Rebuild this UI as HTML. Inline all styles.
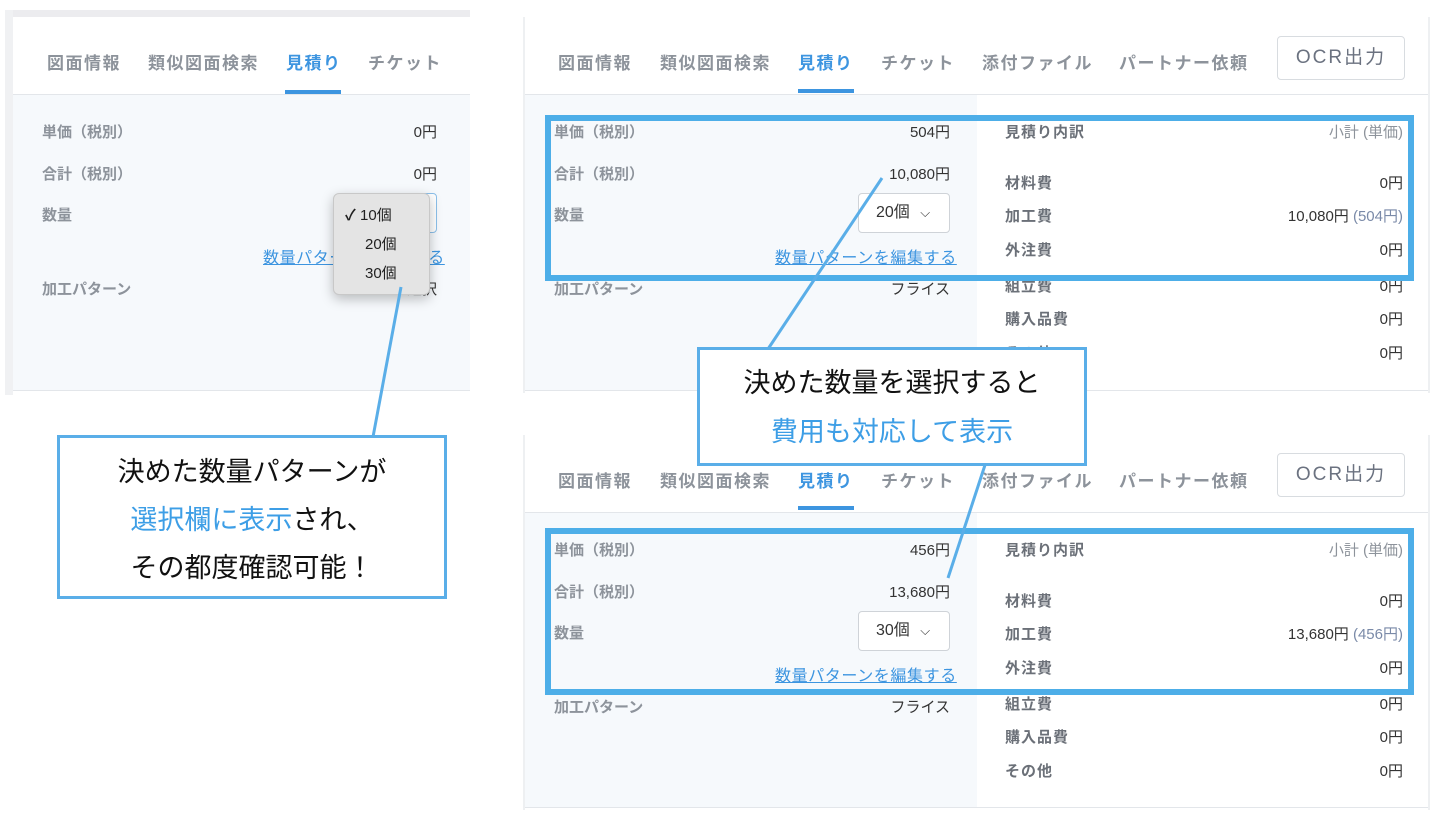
<!DOCTYPE html>
<html><head><meta charset="utf-8"><style>
*{margin:0;padding:0;box-sizing:border-box}
body{width:1440px;height:819px;background:#fff;position:relative;overflow:hidden;font-family:"Liberation Sans","Noto Sans CJK JP",sans-serif;}
.a{position:absolute;white-space:nowrap}
.tab{font-size:17px;font-weight:bold;color:#8d939b;letter-spacing:1.5px}
.tab.on{color:#3d95e0}
.lab{font-size:15px;font-weight:bold;color:#8d939b}
.val{font-size:15px;color:#333;text-align:right}
.rl{font-size:15px;font-weight:bold;color:#6b7078;letter-spacing:1px}
.link{font-size:16px;color:#3d95e0;text-decoration:underline;text-align:right;letter-spacing:0.6px}
.sel{position:absolute;border:1px solid #cfd3d8;border-radius:4px;background:#fff;font-size:16px;color:#333}
.btn{position:absolute;border:1px solid #d8dce0;border-radius:4px;background:#fff;font-size:19px;color:#6b7280;text-align:center;letter-spacing:2px}
.call{position:absolute;border:3px solid #5aaee8;background:#fff;text-align:center;font-size:27px;color:#111}
.blue{color:#3d9ee6}
.box{position:absolute;border:6px solid #4daee8}
</style></head><body>

<!-- Panel A -->
<div class="a" style="left:5px;top:10px;width:465px;height:7px;background:#ececef"></div>
<div class="a" style="left:5px;top:10px;width:8px;height:385px;background:#f0f1f3"></div>
<div class="a" style="left:13px;top:94px;width:457px;height:297px;background:#f6f9fc;border-top:1px solid #e3e6ea;border-bottom:1px solid #e3e6ea"></div>
<div class="a tab" style="left:47px;top:49px">図面情報</div>
<div class="a tab" style="left:148px;top:49px">類似図面検索</div>
<div class="a tab on" style="left:286px;top:49px">見積り</div>
<div class="a tab" style="left:368px;top:49px">チケット</div>
<div class="a" style="left:285px;top:90px;width:56px;height:4px;background:#3d95e0"></div>
<div class="a lab" style="left:42px;top:121px">単価（税別）</div>
<div class="a val" style="left:380px;top:121px;width:57px">0円</div>
<div class="a lab" style="left:42px;top:163px">合計（税別）</div>
<div class="a val" style="left:380px;top:163px;width:57px">0円</div>
<div class="a lab" style="left:42px;top:204px">数量</div>
<div class="sel" style="left:380px;top:193px;width:57px;height:40px;border-color:#8cc0ea"></div>
<div class="a link" style="left:263px;top:244px">数量パターンを編集する</div>
<div class="a lab" style="left:42px;top:278px">加工パターン</div>
<div class="a val" style="left:380px;top:278px;width:57px">選択</div>
<div class="a" style="left:333px;top:193px;width:97px;height:102px;background:#e4e4e4;border:1px solid #c8c8c8;border-radius:6px;box-shadow:0 4px 12px rgba(0,0,0,.25);font-size:15px;color:#222">
<div class="a" style="left:11px;top:10px"><b>✓</b> 10個</div>
<div class="a" style="left:31px;top:39px">20個</div>
<div class="a" style="left:31px;top:68px">30個</div>
</div>

<!-- Panel B and C -->
<div class="a" style="left:523px;top:17px;width:2px;height:376px;background:#eef0f2"></div>
<div class="a" style="left:1428px;top:17px;width:2px;height:376px;background:#eef0f2"></div>
<div class="a" style="left:525px;top:94px;width:903px;height:297px;border-top:1px solid #e3e6ea;border-bottom:1px solid #e3e6ea;background:#fff"></div>
<div class="a" style="left:525px;top:95px;width:452px;height:295px;background:#f6f9fc"></div>

<div class="a" style="left:523px;top:435px;width:2px;height:375px;background:#eef0f2"></div>
<div class="a" style="left:1428px;top:435px;width:2px;height:375px;background:#eef0f2"></div>
<div class="a" style="left:525px;top:512px;width:903px;height:296px;border-top:1px solid #e3e6ea;border-bottom:1px solid #e3e6ea;background:#fff"></div>
<div class="a" style="left:525px;top:513px;width:452px;height:294px;background:#f6f9fc"></div>

<!-- B content -->
<div class="a tab" style="left:558px;top:49px">図面情報</div>
<div class="a tab" style="left:660px;top:49px">類似図面検索</div>
<div class="a tab on" style="left:798px;top:49px">見積り</div>
<div class="a tab" style="left:881px;top:49px">チケット</div>
<div class="a tab" style="left:982px;top:49px">添付ファイル</div>
<div class="a tab" style="left:1119px;top:49px">パートナー依頼</div>
<div class="btn" style="left:1277px;top:36px;width:128px;height:44px;line-height:42px">OCR出力</div>
<div class="a" style="left:798px;top:89px;width:56px;height:4px;background:#3d95e0"></div>
<div class="a lab" style="left:554px;top:121px">単価（税別）</div>
<div class="a val" style="left:850px;top:121px;width:100px">504円</div>
<div class="a lab" style="left:554px;top:163px">合計（税別）</div>
<div class="a val" style="left:850px;top:163px;width:100px">10,080円</div>
<div class="a lab" style="left:554px;top:204px">数量</div>
<div class="sel" style="left:858px;top:193px;width:92px;height:40px;line-height:38px;padding-left:17px">20個 <span style="margin-left:6px;font-size:13px">⌵</span></div>
<div class="a link" style="left:775px;top:244px">数量パターンを編集する</div>
<div class="a lab" style="left:554px;top:278px">加工パターン</div>
<div class="a val" style="left:850px;top:278px;width:100px">フライス</div>
<div class="a rl" style="left:1005px;top:121px">見積り内訳</div>
<div class="a" style="left:1290px;top:121px;width:113px;text-align:right;font-size:15px;color:#8d939b">小計 (単価)</div>
<div class="a rl" style="left:1005px;top:172px">材料費</div><div class="a val" style="left:1300px;top:172px;width:103px">0円</div>
<div class="a rl" style="left:1005px;top:205px">加工費</div><div class="a val" style="left:1200px;top:205px;width:203px">10,080円 <span style="color:#7a8aa8">(504円)</span></div>
<div class="a rl" style="left:1005px;top:239px">外注費</div><div class="a val" style="left:1300px;top:239px;width:103px">0円</div>
<div class="a rl" style="left:1005px;top:275px">組立費</div><div class="a val" style="left:1300px;top:275px;width:103px">0円</div>
<div class="a rl" style="left:1005px;top:308px">購入品費</div><div class="a val" style="left:1300px;top:308px;width:103px">0円</div>
<div class="a rl" style="left:1005px;top:342px">その他</div><div class="a val" style="left:1300px;top:342px;width:103px">0円</div>
<div class="box" style="left:545px;top:115px;width:869px;height:166px"></div>

<!-- C content -->
<div class="a tab" style="left:558px;top:467px">図面情報</div>
<div class="a tab" style="left:660px;top:467px">類似図面検索</div>
<div class="a tab on" style="left:798px;top:467px">見積り</div>
<div class="a tab" style="left:881px;top:467px">チケット</div>
<div class="a tab" style="left:982px;top:467px">添付ファイル</div>
<div class="a tab" style="left:1119px;top:467px">パートナー依頼</div>
<div class="btn" style="left:1277px;top:453px;width:128px;height:44px;line-height:42px">OCR出力</div>
<div class="a" style="left:798px;top:506px;width:56px;height:4px;background:#3d95e0"></div>
<div class="a lab" style="left:554px;top:539px">単価（税別）</div>
<div class="a val" style="left:850px;top:539px;width:100px">456円</div>
<div class="a lab" style="left:554px;top:581px">合計（税別）</div>
<div class="a val" style="left:850px;top:581px;width:100px">13,680円</div>
<div class="a lab" style="left:554px;top:622px">数量</div>
<div class="sel" style="left:858px;top:611px;width:92px;height:40px;line-height:38px;padding-left:17px">30個 <span style="margin-left:6px;font-size:13px">⌵</span></div>
<div class="a link" style="left:775px;top:662px">数量パターンを編集する</div>
<div class="a lab" style="left:554px;top:696px">加工パターン</div>
<div class="a val" style="left:850px;top:696px;width:100px">フライス</div>
<div class="a rl" style="left:1005px;top:539px">見積り内訳</div>
<div class="a" style="left:1290px;top:539px;width:113px;text-align:right;font-size:15px;color:#8d939b">小計 (単価)</div>
<div class="a rl" style="left:1005px;top:590px">材料費</div><div class="a val" style="left:1300px;top:590px;width:103px">0円</div>
<div class="a rl" style="left:1005px;top:623px">加工費</div><div class="a val" style="left:1200px;top:623px;width:203px">13,680円 <span style="color:#7a8aa8">(456円)</span></div>
<div class="a rl" style="left:1005px;top:657px">外注費</div><div class="a val" style="left:1300px;top:657px;width:103px">0円</div>
<div class="a rl" style="left:1005px;top:693px">組立費</div><div class="a val" style="left:1300px;top:693px;width:103px">0円</div>
<div class="a rl" style="left:1005px;top:726px">購入品費</div><div class="a val" style="left:1300px;top:726px;width:103px">0円</div>
<div class="a rl" style="left:1005px;top:760px">その他</div><div class="a val" style="left:1300px;top:760px;width:103px">0円</div>
<div class="box" style="left:545px;top:528px;width:869px;height:167px"></div>

<!-- lines -->
<svg class="a" style="left:0;top:0" width="1440" height="819">
<g stroke="#5aaee8" stroke-width="3">
<line x1="401" y1="287" x2="373" y2="437"/>
<line x1="882" y1="178" x2="768" y2="349"/>
<line x1="985" y1="465" x2="948" y2="578"/>
</g></svg>

<div class="call" style="left:57px;top:435px;width:390px;height:164px;padding-top:10px;line-height:48px">決めた数量パターンが<br><span class="blue">選択欄に表示</span>され、<br>その都度確認可能！</div>
<div class="call" style="left:697px;top:347px;width:390px;height:119px;padding-top:9px;line-height:49px">決めた数量を選択すると<br><span class="blue">費用も対応して表示</span></div>

</body></html>
